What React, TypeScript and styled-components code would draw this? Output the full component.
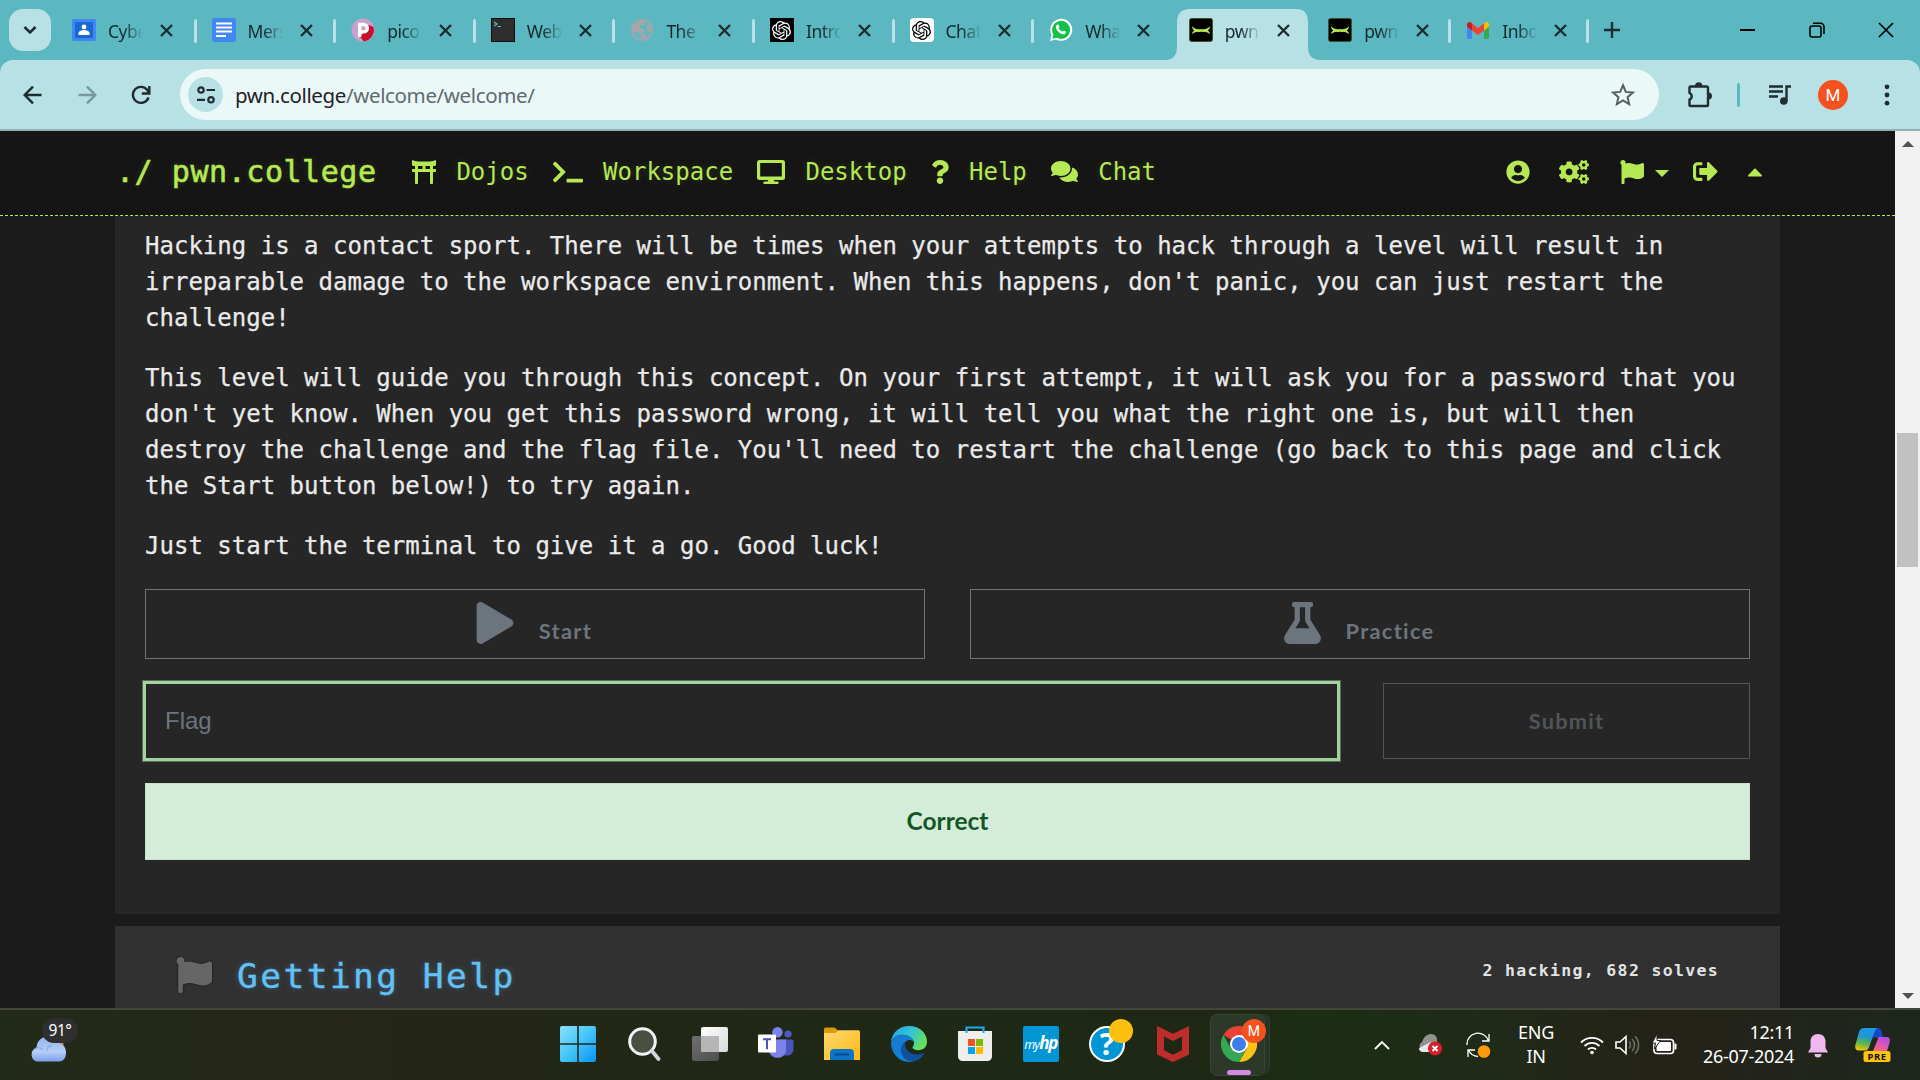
import React from "react";
import styled, { createGlobalStyle, css } from "styled-components";
import {
  FaToriiGate, FaTerminal, FaQuestion, FaComments, FaUserCircle, FaCogs, FaFlag,
  FaSignOutAlt, FaCaretUp, FaPlay, FaFlask,
} from "react-icons/fa";
import { SiOpenai } from "react-icons/si";

const mono = `"DejaVu Sans Mono", "Liberation Mono", monospace`;
const ui = `"Noto Sans", "Open Sans", sans-serif`;

const Global = createGlobalStyle`
  * { box-sizing: border-box; }
  html, body { margin: 0; padding: 0; background: #1b1b1b; overflow: hidden; }
  svg { display: block; flex: none; }
`;

const Screen = styled.div`
  width: 1920px;
  height: 1080px;
  display: flex;
  flex-direction: column;
  overflow: hidden;
  font-family: ${ui};
`;

/* ---------- browser chrome ---------- */
const TabStrip = styled.div`
  height: 60px;
  flex: none;
  display: flex;
  background: #5bb8c1;
  padding-left: 9px;
`;
const TabSearch = styled.div`
  width: 42px;
  height: 42px;
  margin: 9px 5px 0 0;
  border-radius: 14px;
  background: #b7e1e4;
  display: flex;
  align-items: center;
  justify-content: center;
`;
const TabBox = styled.div<{ $w?: number; $sep?: boolean }>`
  position: relative;
  width: ${(p) => p.$w || 139.6}px;
  height: 60px;
  display: flex;
  align-items: center;
  padding-left: 16px;
  ${(p) =>
    p.$sep &&
    css`
      &::after {
        content: "";
        position: absolute;
        right: -1px;
        top: 19px;
        width: 3px;
        height: 24px;
        border-radius: 2px;
        background: #b7e1e4;
      }
    `}
`;
const ActiveShape = styled.svg`
  position: absolute;
  left: -8px;
  top: 9px;
`;
const Favicon = styled.div`
  position: relative;
  width: 24px;
  height: 24px;
  display: flex;
  align-items: center;
  justify-content: center;
`;
const TabTitle = styled.div`
  position: relative;
  width: 34px;
  margin-left: 12px;
  overflow: hidden;
  white-space: nowrap;
  font-size: 17.5px;
  line-height: 24px;
  letter-spacing: -0.5px;
  color: #15292b;
  mask-image: linear-gradient(90deg, #000 45%, transparent 105%);
  padding-top: 2px;
`;
const TabClose = styled.svg`
  position: relative;
  margin-left: 18px;
`;
const NewTab = styled.div`
  width: 48px;
  height: 60px;
  display: flex;
  align-items: center;
  justify-content: center;
`;
const WindowControls = styled.div`
  margin-left: auto;
  display: flex;
  height: 60px;
`;
const WinBtn = styled.div`
  width: 69px;
  display: flex;
  align-items: center;
  justify-content: center;
`;
const ToolbarWrap = styled.div`
  height: 71px;
  flex: none;
  background: #5bb8c1;
`;
const Toolbar = styled.div`
  height: 71px;
  border-radius: 13px 13px 0 0;
  background: #b7e1e4;
  border-bottom: 2px solid #93b0b4;
  display: flex;
  align-items: center;
`;
const NavButtons = styled.div`
  width: 180px;
  padding-left: 21px;
  display: flex;
  gap: 30px;
`;
const Omnibox = styled.div`
  width: 1479px;
  height: 51px;
  border-radius: 26px;
  background: #ebf8f8;
  display: flex;
  align-items: center;
  padding: 0 23px 0 8px;
`;
const SiteInfo = styled.div`
  width: 35px;
  height: 35px;
  border-radius: 50%;
  background: #b7e1e4;
  display: flex;
  align-items: center;
  justify-content: center;
`;
const Url = styled.div`
  margin-left: 12px;
  flex: 1;
  font-size: 20.5px;
  line-height: 30px;
  letter-spacing: -0.37px;
  color: #1f2224;
  span { color: #5f6b6f; }
`;
const Extensions = styled.div`
  flex: 1;
  height: 100%;
  display: flex;
  align-items: center;
  padding-left: 28px;
`;
const ToolDivider = styled.div`
  width: 3px;
  height: 24px;
  border-radius: 2px;
  background: #5bb8c1;
  margin: 0 28px 0 24px;
`;
const Avatar = styled.div`
  width: 30px;
  height: 30px;
  margin: 0 36px 0 26px;
  border-radius: 50%;
  background: #f4511e;
  color: #fff;
  font: 17px/30px Roboto, sans-serif;
  text-align: center;
`;

/* ---------- web page ---------- */
const Viewport = styled.div`
  height: 877px;
  flex: none;
  display: flex;
`;
const Page = styled.div`
  width: 1895px;
  display: flex;
  flex-direction: column;
  overflow: hidden;
  background: #1b1b1b;
`;
const SiteNav = styled.nav`
  height: 85px;
  flex: none;
  display: flex;
  align-items: center;
  padding: 0 132px 3px 116px;
  background: #151515;
  border-bottom: 1px dashed #b5e853;
  color: #b5e853;
  font: 24px/36px ${mono};
  text-shadow: 0 0 8px rgba(181, 232, 83, 0.18);
`;
const Brand = styled.div`
  width: 296px;
  font-size: 30px;
  letter-spacing: 0.55px;
  -webkit-text-stroke: 0.6px #b5e853;
`;
const NavItem = styled.div`
  display: flex;
  align-items: center;
  gap: 20.4px;
  margin-right: 24px;
`;
const NavIcons = styled.div`
  margin-left: auto;
  display: flex;
  align-items: center;
`;
const IconSlot = styled.div<{ $gap: number }>`
  margin-right: ${(p) => p.$gap}px;
`;
const CaretDown = styled.div`
  width: 14px;
  border: 7px solid transparent;
  border-top-color: #b5e853;
  border-bottom: 0;
  margin: 4px 24px 0 11px;
`;
const Content = styled.main`
  width: 1665px;
  margin-left: 115px;
  flex: 1;
  display: flex;
  flex-direction: column;
  gap: 12px;
`;
const Challenge = styled.section`
  height: 698px;
  flex: none;
  padding: 12px 30px 0;
  background: #262626;
`;
const Para = styled.p`
  margin: 0 0 24px;
  color: #eaeaea;
  font: 24px/36px ${mono};
  letter-spacing: 0.01px;
  -webkit-text-stroke: 0.25px #eaeaea;
  white-space: pre;
`;
const Row = styled.div<{ $gap: number; $top: number }>`
  display: flex;
  align-items: flex-start;
  gap: ${(p) => p.$gap}px;
  margin-top: ${(p) => p.$top}px;
`;
const ActionButton = styled.button`
  flex: 1;
  height: 70px;
  border: 1px solid #6c757d;
  background: transparent;
  display: flex;
  justify-content: center;
  gap: 25px;
  padding: 12px 2px 0 0;
  color: #6c757d;
  font: 700 21.8px/30px Lato, sans-serif;
  letter-spacing: 1.3px;
`;
const Label = styled.span`
  padding-top: 14px;
`;
const FlagField = styled.div`
  width: 1197px;
  height: 80px;
  margin: -2px 0 0 -2px;
  border: 3px solid #a3d39c;
  box-shadow: 0 0 0 1px #587055;
  display: flex;
  align-items: center;
  padding-left: 19px;
  color: #6c757d;
  font: 24px/36px "Liberation Sans", Arial, sans-serif;
`;
const Submit = styled.button`
  width: 367px;
  height: 76px;
  border: 1px solid #50555a;
  background: transparent;
  color: #50555a;
  font: 700 21.8px/30px Lato, sans-serif;
  letter-spacing: 1.2px;
`;
const Alert = styled.div`
  height: 77px;
  margin-top: 22px;
  background: #d4edda;
  border: 1px solid #c3e6cb;
  color: #155724;
  font: 700 24.5px/73px Lato, sans-serif;
  text-align: center;
`;
const NextCard = styled.section`
  flex: 1;
  display: flex;
  padding: 31px 61px 0 61px;
  background: #313131;
`;
const FlagMark = styled.div`
  color: #666;
  filter: drop-shadow(0 0 1px #151515);
`;
const CardTitle = styled.h2`
  margin: -5px 0 0 25px;
  color: #63c0f5;
  font: 400 34.5px/48px ${mono};
  letter-spacing: 2.45px;
  -webkit-text-stroke: 0.4px #63c0f5;
  text-shadow: 0 0 6px rgba(99, 192, 245, 0.3);
`;
const Solves = styled.div`
  margin: 1px 0 0 auto;
  color: #e3e3e3;
  font: 700 16.5px/26px ${mono};
  letter-spacing: 1.33px;
`;
const Scrollbar = styled.div`
  width: 25px;
  background: #f1f1f1;
  display: flex;
  flex-direction: column;
  align-items: center;
  padding: 10px 0 9px;
`;
const Arrow = styled.div<{ $down?: boolean }>`
  border: 6px solid transparent;
  ${(p) => (p.$down ? "border-top-color: #505050; border-bottom: 0; margin-top: auto;" : "border-bottom-color: #505050; border-top: 0;")}
`;
const Thumb = styled.div`
  width: 21px;
  height: 134px;
  margin-top: 286px;
  background: #c1c1c1;
`;

/* ---------- taskbar ---------- */
const Taskbar = styled.footer`
  position: relative;
  height: 72px;
  flex: none;
  border-top: 2px solid #42473a;
  background: linear-gradient(90deg, #222a18 0, #262716 18%, #222716 32%, #1e2916 50%, #1e2814 64%, #1c2e13 68%, #202a18 78%, #252219 87%, #1d271e 100%);
  display: flex;
  color: #fff;
`;
const Weather = styled.div`
  position: relative;
  width: 545px;
  padding: 27px 0 0 30px;
`;
const Temp = styled.div`
  position: absolute;
  left: 42px;
  top: 8px;
  width: 36px;
  height: 25px;
  border-radius: 12px;
  background: #2f2f2f;
  font-size: 15.5px;
  line-height: 25px;
  text-align: center;
  letter-spacing: -0.5px;
`;
const Apps = styled.div`
  display: flex;
`;
const AppSlot = styled.div`
  position: relative;
  width: 66.1px;
  display: flex;
  align-items: center;
  justify-content: center;
  padding-bottom: 2px;
`;
const ChromeTile = styled.div`
  position: absolute;
  left: 4px;
  top: 4px;
  width: 60px;
  height: 60px;
  border-radius: 7px;
  background: #283324;
  border-right: 1px solid #35402f;
  &::before {
    content: "";
    position: absolute;
    left: 0;
    top: 0;
    width: 53px;
    height: 60px;
    border-radius: 7px;
    border: 1px solid #39443a;
    background: #2c3828;
  }
`;
const ChromeMark = styled.div`
  position: relative;
`;
const Pill = styled.div`
  position: absolute;
  left: 21px;
  bottom: 5px;
  width: 24px;
  height: 5px;
  border-radius: 3px;
  background: #d18be0;
`;
const Badge = styled.div`
  position: absolute;
  left: 36px;
  top: 9px;
  width: 24px;
  height: 24px;
  border-radius: 50%;
  background: #f4511e;
  font: 14px/24px Roboto, sans-serif;
  text-align: center;
`;
const HpTile = styled.div`
  width: 36px;
  height: 36px;
  border-radius: 2px;
  background: #0096d6;
  font: italic 12.5px/34px "Open Sans", sans-serif;
  letter-spacing: -0.9px;
  text-align: center;
  white-space: nowrap;
  b { font-size: 17px; font-weight: 700; letter-spacing: -1.2px; }
`;
const HelpIcon = styled.div`
  position: relative;
  width: 36px;
  height: 36px;
  border-radius: 50%;
  border: 2px solid #fff;
  background: #0096d6;
  font: 700 30px/32px "Noto Sans", sans-serif;
  text-align: center;
  &::after {
    content: "";
    position: absolute;
    left: 18px;
    top: -9px;
    width: 24px;
    height: 24px;
    border-radius: 50%;
    background: #fdc00f;
  }
`;
const Tray = styled.div`
  margin-left: auto;
  display: flex;
  align-items: center;
  padding-right: 29px;
`;
const TrayItem = styled.div<{ $gap: number; $down?: number }>`
  margin: ${(p) => p.$down || 0}px ${(p) => p.$gap}px 0 0;
`;
const TrayText = styled.div<{ $w: number; $right?: boolean }>`
  width: ${(p) => p.$w}px;
  font-size: 18px;
  line-height: 24px;
  margin-top: -2px;
  text-align: ${(p) => (p.$right ? "right" : "center")};
  letter-spacing: -0.3px;
  white-space: nowrap;
`;

/* ---------- favicons ---------- */
const Classroom = () => (
  <svg width="24" height="22" viewBox="0 0 24 22">
    <rect width="24" height="22" rx="2" fill="#4285f4" />
    <rect x="3" y="3" width="18" height="16" fill="#1967d2" />
    <circle cx="12" cy="8" r="2.4" fill="#fff" />
    <path d="M6.500 16v-2c0-2 3.500-3 5.500-3s5.500 1 5.500 3v2z" fill="#fff" />
  </svg>
);
const Docs = () => (
  <svg width="24" height="24" viewBox="0 0 24 24">
    <rect width="24" height="24" rx="2.500" fill="#4285f4" />
    <path d="M4 5.500h16M4 9.500h16M4 13.500h16M4 18h10" stroke="#fff" strokeWidth="2.200" />
  </svg>
);
const Pico = () => (
  <svg width="24" height="24" viewBox="0 0 24 24">
    <circle cx="12" cy="12" r="11.500" fill="#c9a0cf" />
    <path d="M9 19l4 4.400A11.500 11.500 0 0 0 22.500 9L18 7z" fill="#c8102e" />
    <path d="M8.700 19V6.500h4a3.700 3.700 0 0 1 0 7.400h-4" fill="none" stroke="#fff" strokeWidth="3.400" />
  </svg>
);
const Shell = () => (
  <svg width="24" height="24" viewBox="0 0 24 24">
    <rect x=".5" y=".5" width="23" height="23" fill="#2e2e2e" stroke="#0c0c0c" />
    <path d="M3 4l3 2-3 2M6.500 8.500h3.500" fill="none" stroke="#5bc0cb" strokeWidth="1.200" />
  </svg>
);
const Globe = () => (
  <svg width="22" height="22" viewBox="0 0 22 22">
    <circle cx="11" cy="11" r="10" fill="#5bb8c1" stroke="#a3a6ab" strokeWidth="2" />
    <path d="M2 8c2-4 6-6 9-6l3 1-1 3-4 1-1 2 4 .5 2 2.500-2 2-3 .5-3-1-5-1zM15 7l4-1 1 6-3 1zM10 15l4-1 2 2-3 4-3-1z" fill="#a3a6ab" />
  </svg>
);
const OpenAi = styled.div<{ $dark?: boolean }>`
  width: 24px;
  height: 24px;
  display: grid;
  place-items: center;
  border-radius: ${(p) => (p.$dark ? 0 : 4)}px;
  background: ${(p) => (p.$dark ? "#000" : "#fff")};
  color: ${(p) => (p.$dark ? "#fff" : "#000")};
`;
const WhatsApp = () => (
  <svg width="24" height="24" viewBox="0 0 24 24">
    <path d="M1 23l1.600-6A11 11 0 1 1 7 21.400z" fill="#fff" />
    <path d="M3.200 20.800l1.200-4.300a9 9 0 1 1 3.300 3.200z" fill="#12c04a" />
    <path d="M8.500 6.500c.5-.2 1 0 1.200.5l.7 1.700c.1.500-.9 1.300-.8 1.600.8 1.500 2 2.600 3.600 3.300.4.100 1.200-1.100 1.600-1l1.800.9c.4.200.4.500.3.900-.4 1.500-1.900 2.100-3.200 1.800-3-.7-5.700-3.200-6.700-6-.4-1.500.300-3.200 1.500-3.700z" fill="#fff" />
  </svg>
);
const Pwn = () => (
  <svg width="24" height="24" viewBox="0 0 24 24">
    <rect x=".5" y=".5" width="23" height="23" rx="2" fill="#000" stroke="#3d5420" />
    <path d="M2.800 8.200C6 11 9 11.400 12 11.400s6-.4 9.200-3.200c-.4 2-1.200 3.300-2.400 4.200 1.200.8 2 1.900 2.400 3.600-3-2-6-2.600-9.200-2.600s-6.200.6-9.200 2.600c.4-1.700 1.200-2.800 2.400-3.600-1.200-.9-2-2.200-2.400-4.200z" fill="#b5e853" />
    <path d="M9 13.200l3-1 3 1" fill="none" stroke="#b5e853" strokeWidth="2" />
  </svg>
);
const Gmail = () => (
  <svg width="22" height="17" viewBox="0 0 22 17">
    <path d="M0 3v12.500A1.500 1.500 0 0 0 1.500 17H5V7z" fill="#4285f4" />
    <path d="M22 3v12.500a1.500 1.500 0 0 1-1.500 1.500H17V7z" fill="#34a853" />
    <path d="M5 8.500V1.500l6 4.500 6-4.500v7L11 13z" fill="#ea4335" />
    <path d="M0 4.700V2.500C0 .3 2.500-.7 4.200.7L5 1.400v7z" fill="#c5221f" />
    <path d="M22 4.700V2.500C22 .3 19.500-.7 17.800.7l-.8.7v7z" fill="#fbbc04" />
  </svg>
);

const tabs = [
  { icon: <Classroom />, title: "Cybe", sep: true },
  { icon: <Docs />, title: "Mers", sep: true },
  { icon: <Pico />, title: "pico", sep: true },
  { icon: <Shell />, title: "Web", sep: true },
  { icon: <Globe />, title: "The", sep: true },
  { icon: <OpenAi $dark><SiOpenai size={19} /></OpenAi>, title: "Intro", sep: true },
  { icon: <OpenAi><SiOpenai size={19} /></OpenAi>, title: "Chat", sep: true },
  { icon: <WhatsApp />, title: "Wha", sep: false },
  { icon: <Pwn />, title: "pwn", active: true },
  { icon: <Pwn />, title: "pwn", sep: true, w: 138 },
  { icon: <Gmail />, title: "Inbo", sep: true, w: 138 },
];

const Monitor = () => (
  <svg width="28" height="24" viewBox="0 0 28 24" fill="#b5e853">
    <path fillRule="evenodd" d="M2.500 0h23A2.500 2.500 0 0 1 28 2.500v15a2.500 2.500 0 0 1-2.500 2.500h-23A2.500 2.500 0 0 1 0 17.500v-15A2.500 2.500 0 0 1 2.500 0zM3.200 3v13.500h21.600V3z" />
    <path d="M11.500 19h5l.8 2.600h3.200a1.200 1.200 0 0 1 0 2.400h-13a1.200 1.200 0 0 1 0-2.400h3.200z" />
  </svg>
);

const Chrome = () => (
  <svg width="36" height="36" viewBox="0 0 36 36">
    <path d="M18 18L2.400 9a18 18 0 0 1 31.200 0z" fill="#ea4335" />
    <path d="M18 9h15.600A18 18 0 0 1 18 36l7.800-13.500z" fill="#fbc116" />
    <path d="M2.400 9l7.800 13.500A9 9 0 0 0 25.800 22.500L18 36A18 18 0 0 1 2.400 9z" fill="#34a853" />
    <circle cx="18" cy="18" r="9" fill="#fff" />
    <circle cx="18" cy="18" r="7" fill="#3b7de9" />
  </svg>
);

const Edge = () => (
  <svg width="36" height="36" viewBox="0 0 36 36">
    <defs>
      <linearGradient id="eTop" x1="0" y1="0.2" x2="1" y2="0.6"><stop offset="0" stopColor="#2aa5e8" /><stop offset=".5" stopColor="#35c3d6" /><stop offset="1" stopColor="#69e350" /></linearGradient>
      <linearGradient id="eLow" x1="0" y1="0" x2="0.700" y2="1"><stop offset="0" stopColor="#1c78c8" /><stop offset="1" stopColor="#0a84dd" /></linearGradient>
    </defs>
    <path d="M0 16C1 6 9 0 18 0c11 0 18 7.500 18 15.500 0 5.500-4 8.700-8.500 8.700-4 0-6-1.500-6-2.700 0-1 1.500-1.500 1.500-4.500C23 12 17 9 11.500 9 5.500 9 1.500 12 0 16z" fill="url(#eTop)" />
    <path d="M0 17c1-5.500 5.500-8.500 11-8.500 7 0 12 4.200 12 8.500 0-2-2.500-3-4.500-3-4 0-6 4-6 8.500 0 6 4 11.500 10 12.800C11 38.500 0 29 0 17z" fill="url(#eLow)" />
    <path d="M14.500 15.500c-4 3-5.500 7-4 12 2 6 7.500 8.500 12 8 4.500-.8 8.500-4 10.500-7.500.3-.7-.3-1-1-.7-7 3-17 .5-18-8.800-.1-1.200 0-2.200.5-3z" fill="#12509c" />
  </svg>
);

const Copilot = () => (
  <svg width="36" height="36" viewBox="0 0 36 36">
    <defs>
      <linearGradient id="cA" x1="0.500" y1="0" x2="0.300" y2="1"><stop offset="0" stopColor="#1a9be8" /><stop offset=".35" stopColor="#1e95d8" /><stop offset=".7" stopColor="#62b544" /><stop offset="1" stopColor="#f5c50c" /></linearGradient>
      <linearGradient id="cB" x1="1" y1="0" x2="0.200" y2="1"><stop offset="0" stopColor="#9c4df0" /><stop offset=".5" stopColor="#e055b4" /><stop offset="1" stopColor="#ff6f5c" /></linearGradient>
    </defs>
    <path d="M19 1h3c3 0 4 1.500 4.800 4l1.200 5h-6c-3 0-4 1-5 4z" fill="#1747c8" />
    <path d="M9 1h14c-2 .5-3 2-4 5l-4.500 13c-1 3-2.500 4.500-5 4.500H4c-3.500 0-4.500-2.500-3.500-6L4 5c1-3 2.500-4 5-4z" fill="url(#cA)" />
    <path d="M23 10h8.500c3.500 0 4 2.500 3 6l-2.500 8H10c3 0 4.500-1.500 5.500-4l3-7c1-2 2.500-3 4.500-3z" fill="url(#cB)" />
    <path d="M19 10.500h4.500l-5.500 13.500h-5.500c1.500-1 2-2.500 2.500-4z" fill="#20281c" />
    <rect x="8.500" y="24" width="27" height="11" rx="2.500" fill="#fdc50c" />
    <text x="22" y="33" textAnchor="middle" fontFamily="Noto Sans, sans-serif" fontWeight="700" fontSize="9.500" letterSpacing=".5" fill="#111">PRE</text>
  </svg>
);

const ink = { fill: "none", stroke: "#1f2d30", strokeWidth: 2.4 } as const;

export default function App() {
  return (
    <Screen>
      <Global />
      <TabStrip>
        <TabSearch>
          <svg width="14" height="10" viewBox="0 0 14 10"><path d="M1.500 2l5.500 5.500L12.500 2" {...ink} strokeWidth={2.600} /></svg>
        </TabSearch>
        {tabs.map((t, i) => (
          <TabBox key={i} $w={t.w} $sep={t.sep}>
            {t.active && (
              <ActiveShape width="156" height="51" viewBox="0 0 156 51">
                <path d="M0 51c9 0 12-6 12-13V14C12 5 16 0 25 0h106c9 0 12 5 12 14v24c0 7 3 13 13 13z" fill="#b7e1e4" />
              </ActiveShape>
            )}
            <Favicon>{t.icon}</Favicon>
            <TabTitle>{t.title}</TabTitle>
            <TabClose width="13" height="13" viewBox="0 0 13 13"><path d="M1 1l11 11M12 1L1 12" {...ink} /></TabClose>
          </TabBox>
        ))}
        <NewTab>
          <svg width="16" height="16" viewBox="0 0 16 16"><path d="M8 0v16M0 8h16" {...ink} /></svg>
        </NewTab>
        <WindowControls>
          <WinBtn><svg width="15" height="2"><path d="M0 1h15" stroke="#000" strokeWidth="2" /></svg></WinBtn>
          <WinBtn>
            <svg width="16" height="16" viewBox="0 0 16 16" fill="none" stroke="#000" strokeWidth="1.600">
              <rect x="1" y="4" width="11" height="11" rx="2" />
              <path d="M4 1.200h7.500a3.500 3.500 0 0 1 3.500 3.500V12" />
            </svg>
          </WinBtn>
          <WinBtn><svg width="16" height="16" viewBox="0 0 16 16"><path d="M1 1l14 14M15 1L1 15" stroke="#000" strokeWidth="1.700" /></svg></WinBtn>
        </WindowControls>
      </TabStrip>
      <ToolbarWrap>
        <Toolbar>
          <NavButtons>
            <svg width="24" height="24" viewBox="0 0 24 24"><path d="M20.500 12H4M12 3.700L3.700 12l8.300 8.300" {...ink} /></svg>
            <svg width="24" height="24" viewBox="0 0 24 24" opacity=".4"><path d="M3.500 12H20M12 3.700l8.300 8.300-8.300 8.300" {...ink} /></svg>
            <svg width="24" height="24" viewBox="0 0 24 24"><path d="M19.500 14.500A8 8 0 1 1 18.300 7L20 9.500" {...ink} /><path d="M20.300 3v7.500h-7.500" {...ink} /></svg>
          </NavButtons>
          <Omnibox>
            <SiteInfo>
              <svg width="20" height="20" viewBox="0 0 20 20" {...ink} strokeWidth={2.200}>
                <circle cx="5" cy="5" r="2.700" /><path d="M10.500 5H19M1 14.800h8" /><circle cx="15" cy="14.800" r="2.700" />
              </svg>
            </SiteInfo>
            <Url>pwn.college<span>/welcome/welcome/</span></Url>
            <svg width="26" height="26" viewBox="0 0 24 24"><path d="M12 3l2.600 6.100 6.600.6-5 4.300 1.500 6.500L12 17l-5.700 3.500L7.800 14l-5-4.300 6.600-.6z" fill="none" stroke="#565e60" strokeWidth="1.800" /></svg>
          </Omnibox>
          <Extensions>
            <svg width="26" height="26" viewBox="0 0 26 26">
              <path d="M3.500 4.500h16a1.500 1.500 0 0 1 1.500 1.500v17a1 1 0 0 1-1 1H3.500a1 1 0 0 1-1-1v-5.500a3.500 3.500 0 0 0 0-6.500V5.500a1 1 0 0 1 1-1z" {...ink} />
              <path d="M8 4a3.700 3.700 0 0 1 7.400 0zM21.500 10.500a3.500 3.500 0 0 1 0 7z" fill="#1f2d30" />
            </svg>
            <ToolDivider />
            <svg width="24" height="22" viewBox="0 0 24 22">
              <path d="M1 2.500h14M1 7.500h14M1 12.500h9M18.500 17V2.500H23" {...ink} />
              <circle cx="15.800" cy="17" r="3.800" fill="#1f2d30" />
            </svg>
            <Avatar>M</Avatar>
            <svg width="6" height="22" viewBox="0 0 6 22" fill="#1f2d30"><circle cx="3" cy="2.800" r="2.400" /><circle cx="3" cy="11" r="2.400" /><circle cx="3" cy="19.200" r="2.400" /></svg>
          </Extensions>
        </Toolbar>
      </ToolbarWrap>

      <Viewport>
        <Page>
          <SiteNav>
            <Brand>./ pwn.college</Brand>
            <NavItem><FaToriiGate size={24} />Dojos</NavItem>
            <NavItem><FaTerminal size={30} style={{ height: 24 }} />Workspace</NavItem>
            <NavItem><Monitor />Desktop</NavItem>
            <NavItem><FaQuestion size={24} style={{ width: 18 }} />Help</NavItem>
            <NavItem><FaComments size={27} />Chat</NavItem>
            <NavIcons>
              <IconSlot $gap={29}><FaUserCircle size={24} /></IconSlot>
              <IconSlot $gap={31}><FaCogs size={30} /></IconSlot>
              <FaFlag size={24} />
              <CaretDown />
              <IconSlot $gap={29}><FaSignOutAlt size={25} /></IconSlot>
              <FaCaretUp size={24} style={{ width: 16 }} />
            </NavIcons>
          </SiteNav>
          <Content>
            <Challenge>
              <Para>{"Hacking is a contact sport. There will be times when your attempts to hack through a level will result in\nirreparable damage to the workspace environment. When this happens, don't panic, you can just restart the\nchallenge!"}</Para>
              <Para>{"This level will guide you through this concept. On your first attempt, it will ask you for a password that you\ndon't yet know. When you get this password wrong, it will tell you what the right one is, but will then\ndestroy the challenge and the flag file. You'll need to restart the challenge (go back to this page and click\nthe Start button below!) to try again."}</Para>
              <Para>Just start the terminal to give it a go. Good luck!</Para>
              <Row $gap={45} $top={25}>
                <ActionButton><FaPlay size={42} style={{ width: 38 }} /><Label>Start</Label></ActionButton>
                <ActionButton><FaFlask size={42} style={{ width: 37 }} /><Label>Practice</Label></ActionButton>
              </Row>
              <Row $gap={43} $top={24}>
                <FlagField>Flag</FlagField>
                <Submit>Submit</Submit>
              </Row>
              <Alert>Correct</Alert>
            </Challenge>
            <NextCard>
              <FlagMark><FaFlag size={36} /></FlagMark>
              <CardTitle>Getting Help</CardTitle>
              <Solves>2 hacking, 682 solves</Solves>
            </NextCard>
          </Content>
        </Page>
        <Scrollbar>
          <Arrow />
          <Thumb />
          <Arrow $down />
        </Scrollbar>
      </Viewport>

      <Taskbar>
        <Weather>
          <svg width="48" height="26" viewBox="0 0 48 26">
            <defs><linearGradient id="cl" x1="0" y1="0" x2="0" y2="1"><stop offset="0" stopColor="#8fb4ee" /><stop offset=".6" stopColor="#b5cff8" /><stop offset="1" stopColor="#7d9fe8" /></linearGradient></defs>
            <path d="M26 4h8l-1 6h-5z" fill="#e8792b" />
            <path d="M7 24.500A7 7 0 0 1 6.500 11C7 4 11 0 16 0c4 0 6.500 2 8 5.500 7-.5 12 3 12 10 0 6-3 9-7 9z" fill="url(#cl)" />
            <path d="M4 12c3-2 7-1.500 9 1M22 8c-3 1-5 3-5.500 6" fill="none" stroke="#7f9fe2" strokeWidth="1.500" opacity=".6" />
          </svg>
          <Temp>91°</Temp>
        </Weather>
        <Apps>
          <AppSlot>
            <svg width="36" height="36" viewBox="0 0 36 36">
              <defs><linearGradient id="win" x1="0" y1="0" x2="1" y2="1"><stop offset="0" stopColor="#8ae0fb" /><stop offset=".5" stopColor="#43c6fb" /><stop offset="1" stopColor="#0a93f5" /></linearGradient></defs>
              <path d="M2 0h15.200v17.200H0V2a2 2 0 0 1 2-2zM18.800 0H34a2 2 0 0 1 2 2v15.200H18.800zM0 18.800h17.200V36H2a2 2 0 0 1-2-2zM18.800 18.800H36V34a2 2 0 0 1-2 2H18.800z" fill="url(#win)" />
            </svg>
          </AppSlot>
          <AppSlot>
            <svg width="34" height="34" viewBox="0 0 34 34"><circle cx="15.500" cy="14.500" r="12.800" fill="#475041" stroke="#f4f4f4" strokeWidth="3" /><path d="M25 24l6.500 8" stroke="#d4d7da" strokeWidth="3.800" strokeLinecap="round" /></svg>
          </AppSlot>
          <AppSlot>
            <svg width="36" height="34" viewBox="0 0 36 34">
              <defs><linearGradient id="tvb" x1="0" y1="0" x2="1" y2="1"><stop offset="0" stopColor="#6f706f" /><stop offset="1" stopColor="#4d4e4e" /></linearGradient><linearGradient id="tvf" x1="0" y1="0" x2="1" y2="1"><stop offset="0" stopColor="#fff" /><stop offset="1" stopColor="#d9d9d9" /></linearGradient></defs>
              <rect y="9" width="27" height="25" rx="2" fill="url(#tvb)" /><rect x="9" width="27" height="25" rx="2" fill="url(#tvf)" /><path d="M9 9h18v16H11a2 2 0 0 1-2-2z" fill="#b5b6b6" />
            </svg>
          </AppSlot>
          <AppSlot>
            <svg width="36" height="34" viewBox="0 0 36 34">
              <circle cx="30" cy="7" r="3.600" fill="#5059c9" /><path d="M22 12.500h12a1.500 1.500 0 0 1 1.500 1.500v8c0 4-2.500 6.500-6.500 6.500h-5z" fill="#4b53bc" />
              <circle cx="19.500" cy="5.300" r="5.200" fill="#7b83eb" /><path d="M11 12.500h17v12.200a9 9 0 0 1-17 0z" fill="#7b83eb" />
              <rect y="7.500" width="18" height="18" rx="1" fill="#fff" /><path d="M5 12.200h8M9 12.200v10" stroke="#4b53bc" strokeWidth="2" />
            </svg>
          </AppSlot>
          <AppSlot>
            <svg width="36" height="34" viewBox="0 0 36 34">
              <defs><linearGradient id="fo" x1="0" y1="0" x2="1" y2="1"><stop offset="0" stopColor="#ffd873" /><stop offset="1" stopColor="#fcb910" /></linearGradient></defs>
              <path d="M0 2a1.500 1.500 0 0 1 1.500-1.500h9L15 4v6H0z" fill="#dc9a08" /><path d="M0 6h11l4-2.800h19.500A1.500 1.500 0 0 1 36 4.700V33H0z" fill="url(#fo)" />
              <path d="M6 33v-7a4 4 0 0 1 4-4h16a4 4 0 0 1 4 4v7z" fill="#0c74c8" /><path d="M11.500 27.500h13" stroke="#064a86" strokeWidth="1.800" strokeLinecap="round" />
            </svg>
          </AppSlot>
          <AppSlot><Edge /></AppSlot>
          <AppSlot>
            <svg width="36" height="36" viewBox="0 0 36 36">
              <path d="M9.500 7V1.500h17V7" fill="none" stroke="#1fa8ef" strokeWidth="2.200" />
              <path d="M1 5h34v25.500A4.500 4.500 0 0 1 30.500 35h-25A4.500 4.500 0 0 1 1 30.500z" fill="#eeeeee" />
              <path d="M9.500 7V5M26.500 7V5" stroke="#1fa8ef" strokeWidth="2" />
              <rect x="11" y="13" width="7" height="7" fill="#f25022" /><rect x="19" y="13" width="7" height="7" fill="#7fba00" /><rect x="11" y="21" width="7" height="7" fill="#00a4ef" /><rect x="19" y="21" width="7" height="7" fill="#ffb900" />
            </svg>
          </AppSlot>
          <AppSlot><HpTile>my<b>hp</b></HpTile></AppSlot>
          <AppSlot><HelpIcon>?</HelpIcon></AppSlot>
          <AppSlot>
            <svg width="32" height="36" viewBox="0 0 32 36"><path d="M0 0l16 7.800L32 0v28.500L16 36 0 28.500zM7 10.500v13.800l9 4.400 9-4.400V10.500l-9 4.600z" fill="#bf2c2c" fillRule="evenodd" /></svg>
          </AppSlot>
          <AppSlot><ChromeTile /><ChromeMark><Chrome /></ChromeMark><Badge>M</Badge><Pill /></AppSlot>
        </Apps>
        <Tray>
          <TrayItem $gap={28}><svg width="16" height="10" viewBox="0 0 16 10"><path d="M1 9l7-7 7 7" fill="none" stroke="#fff" strokeWidth="1.800" /></svg></TrayItem>
          <TrayItem $gap={24} $down={0}>
            <svg width="24" height="22" viewBox="0 0 24 22"><path d="M5 17A5 5 0 0 1 4 8C6 2 10 0 13 0c4 0 6 3 6 6 1 6-2 11-6 11z" fill="#8f928d" /><path d="M1 14l12-6v10H5c-3 0-4-2-4-4z" fill="#e9e9e9" /><circle cx="17" cy="14.500" r="7" fill="#d91f2c" /><path d="M14.500 12l5 5M19.500 12l-5 5" stroke="#fff" strokeWidth="1.800" /></svg>
          </TrayItem>
          <TrayItem $gap={27}>
            <svg width="25" height="26" viewBox="0 0 25 26" fill="none" stroke="#fff" strokeWidth="1.300"><path d="M1 13A11 11 0 0 1 22.500 9M23 2v7h-7M12 24.500A11 11 0 0 1 2.500 18M2 25v-7h7" /><circle cx="18" cy="19.500" r="6.300" fill="#ff9b0b" stroke="none" /></svg>
          </TrayItem>
          <TrayText $w={36}>ENG<br />IN</TrayText>
          <TrayItem $gap={26} />
          <TrayItem $gap={11}>
            <svg width="24" height="20" viewBox="0 0 24 20" fill="none" stroke="#fff" strokeWidth="1.800"><path d="M1 7.500a15.500 15.500 0 0 1 22 0M4.500 11a10.500 10.500 0 0 1 15 0M8 14.500a5.700 5.700 0 0 1 8 0" /><circle cx="12" cy="17.500" r="1.800" fill="#fff" stroke="none" /></svg>
          </TrayItem>
          <TrayItem $gap={12}>
            <svg width="25" height="22" viewBox="0 0 25 22" fill="none" stroke="#fff" strokeWidth="1.600"><path d="M1 8h4l6-5.500v17L5 14H1z" /><g stroke="#6b7066"><path d="M14 7.500a5 5 0 0 1 0 7M17 5a8.500 8.500 0 0 1 0 12M20 2.300a12.500 12.500 0 0 1 0 17.400" /></g></svg>
          </TrayItem>
          <TrayItem $gap={19}>
            <svg width="25" height="22" viewBox="0 0 25 22"><rect x="2" y="5.500" width="19.500" height="14" rx="3" fill="none" stroke="#fff" strokeWidth="1.600" /><rect x="4.500" y="8" width="14.500" height="9" rx="1" fill="#fff" /><path d="M22.500 9.500h1a1 1 0 0 1 1 1v4a1 1 0 0 1-1 1h-1z" fill="#fff" /><path d="M5 0L0 9h3.500L2.500 15 8.500 6.500H5z" fill="#fff" stroke="#252318" strokeWidth="1" /></svg>
          </TrayItem>
          <TrayText $w={98} $right>12:11<br />26-07-2024</TrayText>
          <TrayItem $gap={14} />
          <TrayItem $gap={27} $down={1}>
            <svg width="20" height="24" viewBox="0 0 20 24" fill="#efb8ef"><path d="M10 0c4.500 0 7.500 3 7.500 7.500V14l2.500 4.500H0L2.500 14V7.500C2.500 3 5.500 0 10 0zM6.500 20h7a3.500 3.500 0 0 1-7 0z" /></svg>
          </TrayItem>
          <Copilot />
        </Tray>
      </Taskbar>
    </Screen>
  );
}
